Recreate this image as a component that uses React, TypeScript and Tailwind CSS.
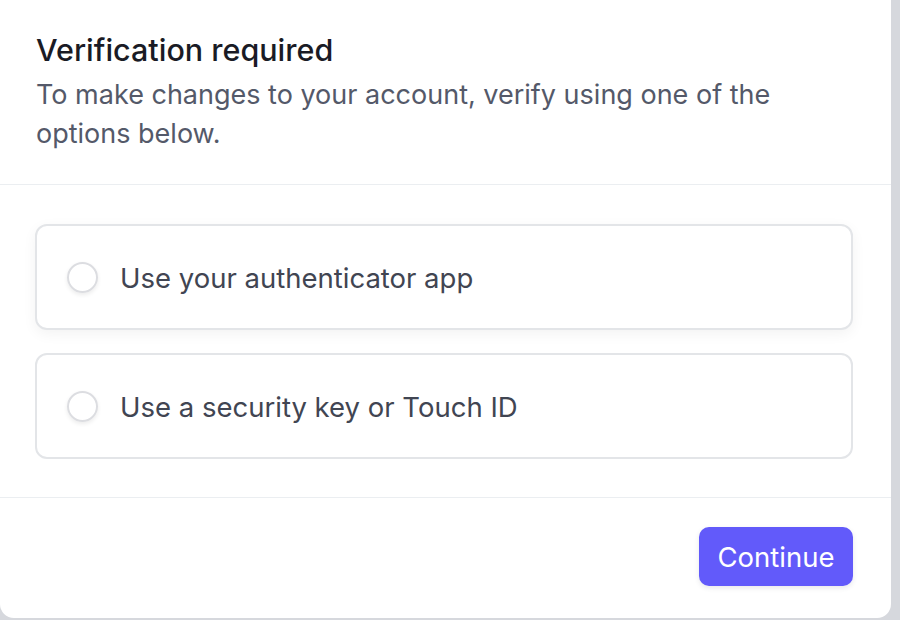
import { useState } from 'react';

const options = [
  { id: 'totp', label: 'Use your authenticator app' },
  { id: 'webauthn', label: 'Use a security key or Touch ID' },
];

export default function App() {
  const [selected, setSelected] = useState<string | null>(null);

  return (
    <div
      className="w-[900px] h-[620px] bg-[#d6d8dd] overflow-hidden"
      style={{ fontFamily: 'Inter, "Noto Sans", sans-serif' }}
    >
      <div className="w-[891px] h-[618px] bg-white rounded-b-[14px] flex flex-col">
        {/* header */}
        <div className="pl-[36px] pr-[38px] pt-[32px] pb-[31px] border-b border-[#ebeef1]">
          <h1 className="text-[30.5px] leading-[36px] font-medium text-[#1a1b25]">
            Verification required
          </h1>
          <p className="mt-[7px] text-[27px] leading-[39px] text-[#545969] pr-[40px]">
            To make changes to your account, verify using one of the options below.
          </p>
        </div>

        {/* options */}
        <div className="pl-[35px] pr-[38px] pt-[39px] pb-[38px] flex flex-col gap-[23px] border-b border-[#ebeef1]">
          {options.map((opt, i) => (
            <button
              key={opt.id}
              onClick={() => setSelected(opt.id)}
              className={`h-[106px] flex items-center gap-[22px] pl-[30px] rounded-[12px] border-2 border-[#e3e5e8] bg-white text-left ${
                i === 0 ? 'shadow-[0_4px_14px_rgba(0,0,0,0.05)]' : ''
              }`}
            >
              <span
                className={`w-[31px] h-[31px] rounded-full border-2 shadow-[0_2px_4px_rgba(0,0,0,0.08)] ${
                  selected === opt.id ? 'border-[#635bff] border-[9px]' : 'border-[#dcdde1]'
                }`}
              />
              <span className="mt-[3px] text-[27.5px] text-[#414552]">{opt.label}</span>
            </button>
          ))}
        </div>

        {/* footer */}
        <div className="flex justify-end pr-[38px] pt-[29px]">
          <button className="h-[59px] w-[154px] pt-[2px] rounded-[10px] bg-[#625afa] text-white text-[27.5px] shadow-[0_2px_5px_rgba(60,66,87,0.12)]">
            Continue
          </button>
        </div>
      </div>
    </div>
  );
}
